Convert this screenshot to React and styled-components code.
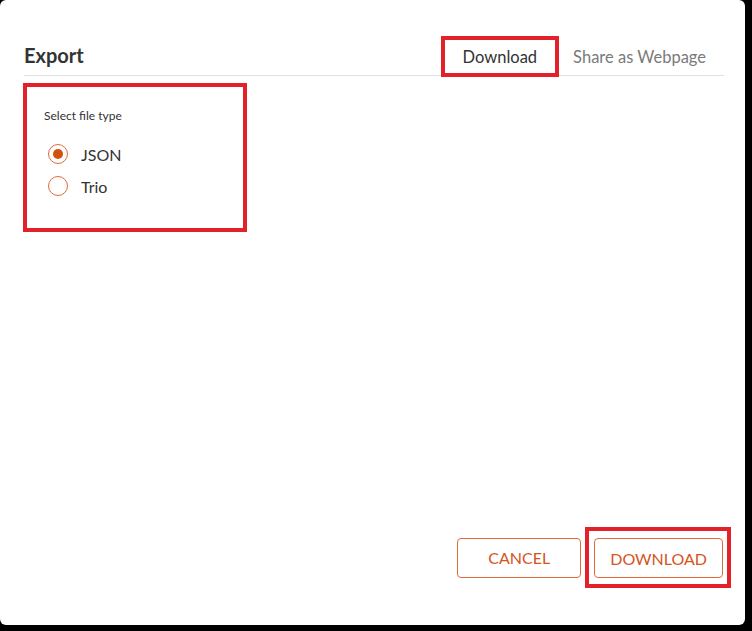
import React, { useState } from "react";
import styled, { createGlobalStyle } from "styled-components";

const GlobalStyle = createGlobalStyle`
  html, body {
    margin: 0;
    padding: 0;
    background: #000;
  }
  body {
    font-family: Lato, "Open Sans", Arial, sans-serif;
    color: #333;
  }
`;

const MARK = "#e3212a";
const ORANGE = "#d4541c";
const ORANGE_LINE = "#de6c3a";

const Modal = styled.div`
  width: 745px;
  height: 625px;
  background: #fff;
  border-radius: 6px;
  display: flex;
  flex-direction: column;
  box-sizing: border-box;
`;

const Header = styled.header`
  height: 75px;
  margin: 0 21px 0 24px;
  border-bottom: 1px solid #e0e0e0;
  display: flex;
  align-items: flex-end;
  justify-content: space-between;
`;

const Title = styled.h2`
  margin: 0 0 3px;
  font-size: 20px;
  font-weight: 700;
  line-height: 33px;
  color: #333;
`;

const Tabs = styled.nav`
  display: flex;
  align-items: flex-end;
`;

const Tab = styled.button`
  margin: 0 0 2px;
  padding: 0 18px;
  height: 33px;
  border: 0;
  background: none;
  font-family: inherit;
  font-size: 16.5px;
  color: ${({ $active }) => ($active ? "#333" : "#7a7a7a")};
  outline: ${({ $active }) => ($active ? `4px solid ${MARK}` : "none")};
  cursor: pointer;
`;

const Body = styled.section`
  flex: 1;
  padding: 7px 0 0 23px;
`;

const FieldGroup = styled.fieldset`
  width: 224px;
  height: 149px;
  box-sizing: border-box;
  margin: 0;
  padding: 21px 16px 0 17px;
  border: 4px solid ${MARK};
`;

const Legend = styled.div`
  font-size: 12px;
  line-height: 16px;
  color: #333;
  margin-bottom: 14px;
`;

const RadioRow = styled.label`
  display: flex;
  align-items: center;
  height: 32px;
  gap: 13px;
  padding-left: 4px;
  font-size: 16px;
  color: #333;
  cursor: pointer;
`;

const RadioCircle = styled.span`
  width: 20px;
  height: 20px;
  box-sizing: border-box;
  border: 1.5px solid ${ORANGE_LINE};
  border-radius: 50%;
  display: flex;
  align-items: center;
  justify-content: center;

  &::after {
    content: "";
    width: 10px;
    height: 10px;
    border-radius: 50%;
    background: ${({ $checked }) => ($checked ? "#d4500f" : "transparent")};
  }
`;

const Footer = styled.footer`
  display: flex;
  justify-content: flex-end;
  align-items: center;
  gap: 4px;
  padding: 0 14px 37px 0;
`;

const Marked = styled.div`
  border: 4px solid ${MARK};
  padding: 7px 4px 6px 5px;
`;

const Button = styled.button`
  min-width: 124px;
  height: 40px;
  padding: 0 15px;
  background: #fff;
  border: 1px solid ${ORANGE_LINE};
  border-radius: 4px;
  color: ${ORANGE};
  font-family: inherit;
  font-size: 16px;
  text-transform: uppercase;
  cursor: pointer;
`;

const types = ["JSON", "Trio"];

export default function App() {
  const [type, setType] = useState("JSON");
  const [tab, setTab] = useState("download");

  return (
    <>
      <GlobalStyle />
      <Modal>
        <Header>
          <Title>Export</Title>
          <Tabs>
            <Tab $active={tab === "download"} onClick={() => setTab("download")}>
              Download
            </Tab>
            <Tab $active={tab === "share"} onClick={() => setTab("share")}>
              Share as Webpage
            </Tab>
          </Tabs>
        </Header>
        <Body>
          <FieldGroup>
            <Legend>Select file type</Legend>
            {types.map((t) => (
              <RadioRow key={t} onClick={() => setType(t)}>
                <RadioCircle $checked={type === t} />
                {t}
              </RadioRow>
            ))}
          </FieldGroup>
        </Body>
        <Footer>
          <Button>Cancel</Button>
          <Marked>
            <Button>Download</Button>
          </Marked>
        </Footer>
      </Modal>
    </>
  );
}
